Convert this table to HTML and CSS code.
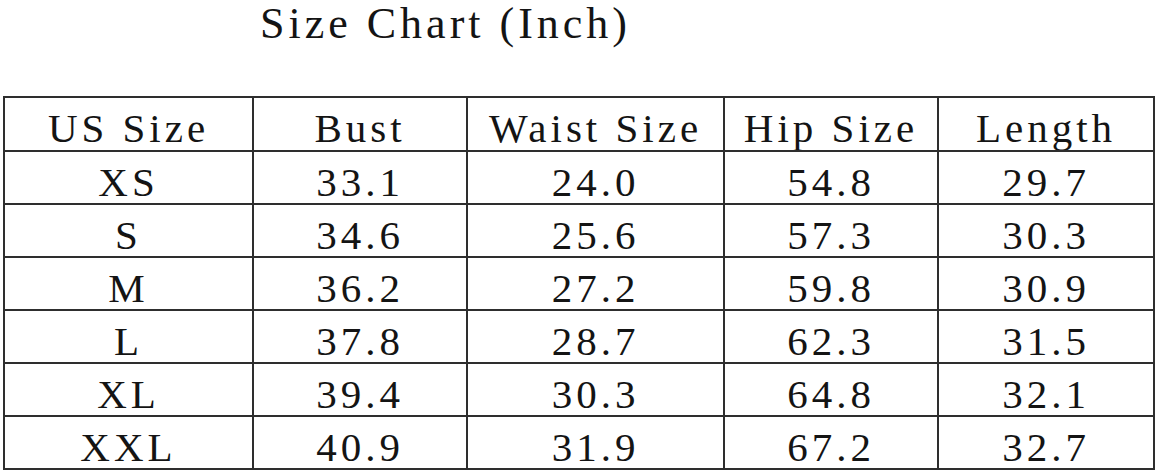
FILE: index.html
```html
<!DOCTYPE html>
<html lang="en">
<head>
<meta charset="utf-8">
<title>Size Chart</title>
<link rel="stylesheet" href="styles.css">
</head>
<body>
<div class="page">
  <h1 class="title">Size Chart (Inch)</h1>
  <table class="chart">
    <colgroup>
      <col class="c1"><col class="c2"><col class="c3"><col class="c4"><col class="c5">
    </colgroup>
    <thead>
      <tr><th>US Size</th><th>Bust</th><th>Waist Size</th><th>Hip Size</th><th>Length</th></tr>
    </thead>
    <tbody>
      <tr><td>XS</td><td>33.1</td><td>24.0</td><td>54.8</td><td>29.7</td></tr>
      <tr><td>S</td><td>34.6</td><td>25.6</td><td>57.3</td><td>30.3</td></tr>
      <tr><td>M</td><td>36.2</td><td>27.2</td><td>59.8</td><td>30.9</td></tr>
      <tr><td>L</td><td>37.8</td><td>28.7</td><td>62.3</td><td>31.5</td></tr>
      <tr><td>XL</td><td>39.4</td><td>30.3</td><td>64.8</td><td>32.1</td></tr>
      <tr><td>XXL</td><td>40.9</td><td>31.9</td><td>67.2</td><td>32.7</td></tr>
    </tbody>
  </table>
</div>
</body>
</html>
```
FILE: styles.css
```css
html, body {
  margin: 0;
  padding: 0;
  background: #ffffff;
}

.page {
  padding: 2px 0 0 3px;
  font-family: "Liberation Serif", "Times New Roman", serif;
  color: #141414;
}

.title {
  margin: 0 0 50px 257px;
  font-size: 44px;
  font-weight: normal;
  line-height: 44px;
  letter-spacing: 4px;
  height: 44px;
}

.chart {
  border-collapse: collapse;
  table-layout: fixed;
  width: 1150px;
}

.c1 { width: 249px; }
.c2 { width: 214px; }
.c3 { width: 257px; }
.c4 { width: 214px; }
.c5 { width: 216px; }

.chart th,
.chart td {
  border: 2px solid #2e2e2e;
  padding: 10px 0 0 0;
  height: 41px;
  font-size: 41px;
  font-weight: normal;
  line-height: 41px;
  letter-spacing: 4px;
  text-align: center;
  vertical-align: top;
  white-space: nowrap;
  overflow: hidden;
}

.chart th {
  height: 42px;
}
```
